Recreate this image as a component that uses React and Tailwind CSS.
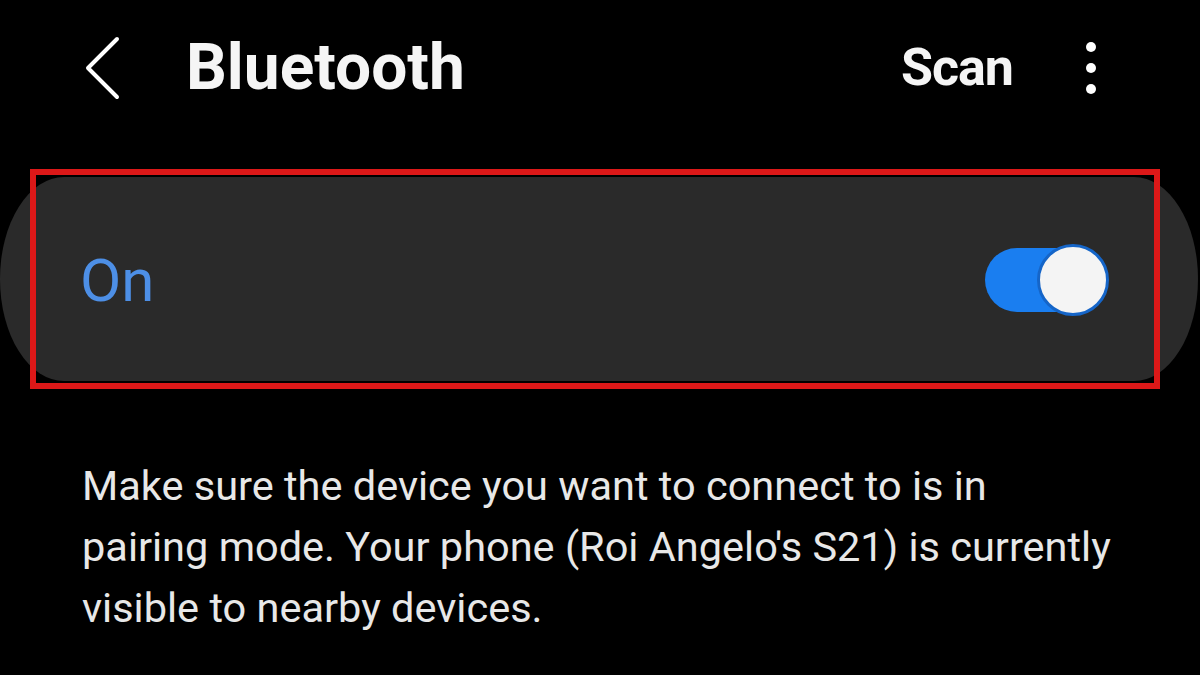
import React from "react";

function BackChevron() {
  return (
    <svg width="36" height="64" viewBox="0 0 36 64" fill="none" className="shrink-0">
      <polyline points="32,3 3,32 32,61" stroke="#ffffff" strokeWidth="4" strokeLinecap="round" strokeLinejoin="round" />
    </svg>
  );
}

function Kebab() {
  return (
    <div className="flex flex-col items-center gap-[11px]">
      <span className="block w-[10px] h-[10px] rounded-full bg-white" />
      <span className="block w-[10px] h-[10px] rounded-full bg-white" />
      <span className="block w-[10px] h-[10px] rounded-full bg-white" />
    </div>
  );
}

function Toggle() {
  return (
    <div className="relative w-[124px] h-[72px] flex items-center">
      <div className="w-[118px] h-[64px] rounded-full bg-[#1a7ef0]" />
      <div className="absolute right-0 top-0 w-[72px] h-[72px] rounded-full bg-[#f4f4f4] border-[3px] border-[#1565c8]" />
    </div>
  );
}

export default function App() {
  return (
    <div className="w-[1200px] h-[675px] bg-black overflow-hidden relative font-['Roboto','Liberation_Sans',sans-serif]">
      <header className="h-[136px] flex items-center pl-[85px] pr-[104px]">
        <BackChevron />
        <h1 className="ml-[65px] text-[64px] leading-none font-bold text-[#f5f5f5]">Bluetooth</h1>
        <div className="ml-auto flex items-center">
          <span className="text-[52px] leading-none font-bold text-[#f5f5f5] tracking-[-1px]">Scan</span>
          <div className="ml-[73px]">
            <Kebab />
          </div>
        </div>
      </header>

      <section className="relative mt-[41px]">
        <div className="mr-[2px] h-[204px] bg-[#2a2a2a] rounded-[64px/102px] flex items-center pl-[80px] pr-[89px]">
          <span className="text-[60px] leading-none text-[#4d8fe6] mt-[4px]">On</span>
          <div className="ml-auto mt-[2px]">
            <Toggle />
          </div>
        </div>
        <div className="absolute left-[30px] top-[-8px] w-[1130px] h-[220px] border-[6px] border-[#dc1818] pointer-events-none" />
      </section>

      <p className="mt-[74px] pl-[82px] pr-[60px] text-[41.5px] leading-[61px] text-[#e8e8e8]">
        Make sure the device you want to connect to is in<br />
        pairing mode. Your phone (Roi Angelo's S21) is currently<br />
        visible to nearby devices.
      </p>
    </div>
  );
}
